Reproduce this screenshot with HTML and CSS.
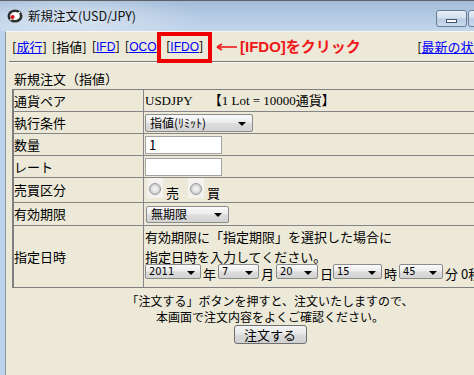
FILE: index.html
```html
<!DOCTYPE html>
<html lang="ja">
<head>
<meta charset="utf-8">
<title>新規注文(USD/JPY)</title>
<link rel="stylesheet" href="styles.css">
</head>
<body>
<div class="window">
  <div class="titlebar">
    <svg class="app-icon" width="16" height="14" viewBox="0 0 16 14">
      <ellipse cx="8" cy="7" rx="6.2" ry="5.3" fill="#fff" stroke="#2e2e2e" stroke-width="2.6"/>
      <path d="M3 11 L13 3" stroke="#fff" stroke-width="1.6"/>
      <circle cx="5.6" cy="8" r="2" fill="#e01010"/>
    </svg>
    <span class="title">新規注文(USD/JPY)</span>
    <div class="controls">
      <span class="ctl ctl-min"><span class="min-glyph"></span></span>
      <span class="ctl ctl-max"></span>
      <span class="ctl ctl-close"></span>
    </div>
  </div>
  <div class="client">
    <div class="nav">
      <span class="tab">[<a href="#">成行</a>]</span>
      <span class="tab">[指値]</span>
      <span class="tab">[<a href="#" class="latin">IFD</a>]</span>
      <span class="tab">[<a href="#" class="latin">OCO</a>]</span>
      <span class="tab">[<a href="#" class="latin">IFDO</a>]</span>
      <span class="tab latest">[<a href="#">最新の状況</a>]</span>
    </div>
    <span class="callout-box"></span>
    <div class="callout">
      <svg class="callout-arrow" width="22" height="10" viewBox="0 0 22 10">
        <path d="M2 5 H21" stroke="#f01818" stroke-width="1.6"/>
        <path d="M1 5 L6 2 M1 5 L6 8" stroke="#f01818" stroke-width="1.6" fill="none"/>
      </svg>
      <span class="callout-text">[IFDO]をクリック</span>
    </div>
    <div class="main">
      <div class="section-title">新規注文（指値）</div>
      <div class="form">
        <div class="cell label">通貨ペア</div>
        <div class="cell value"><span class="pair">USDJPY</span><span class="lot">【1 Lot = 10000通貨】</span></div>

        <div class="cell label">執行条件</div>
        <div class="cell value"><span class="select sel-exec"><span class="sel-text">指値(ﾘﾐｯﾄ)</span><span class="arrow"></span></span></div>

        <div class="cell label">数量</div>
        <div class="cell value"><span class="input">1</span></div>

        <div class="cell label">レート</div>
        <div class="cell value"><span class="input"></span></div>

        <div class="cell label">売買区分</div>
        <div class="cell value radios">
          <span class="radio-item"><span class="radio-box"><span class="radio"></span></span><span class="radio-label">売</span></span>
          <span class="radio-item second"><span class="radio-box"><span class="radio"></span></span><span class="radio-label">買</span></span>
        </div>

        <div class="cell label">有効期限</div>
        <div class="cell value"><span class="select sel-expire"><span class="sel-text">無期限</span><span class="arrow"></span></span></div>

        <div class="cell label last">指定日時</div>
        <div class="cell value last datetime">
          <div class="dt-text">有効期限に「指定期限」を選択した場合に<br>指定日時を入力してください。</div>
          <div class="date-row">
            <span class="select small w-year"><span class="sel-text">2011</span><span class="arrow"></span></span><span class="unit">年</span>
            <span class="select small w-month"><span class="sel-text">7</span><span class="arrow"></span></span><span class="unit">月</span>
            <span class="select small w-day"><span class="sel-text">20</span><span class="arrow"></span></span><span class="unit tight">日</span>
            <span class="select small w-hour"><span class="sel-text">15</span><span class="arrow"></span></span><span class="unit">時</span>
            <span class="select small w-min"><span class="sel-text">45</span><span class="arrow"></span></span><span class="unit">分 0秒</span>
          </div>
        </div>
      </div>
      <div class="note">
        <p class="note-line">「注文する」ボタンを押すと、注文いたしますので、</p>
        <p class="note-line">本画面で注文内容をよくご確認ください。</p>
        <div class="btn-row"><button class="order-btn" type="button">注文する</button></div>
      </div>
    </div>
  </div>
</div>
</body>
</html>
```

FILE: styles.css
```css
html, body {
  margin: 0;
  padding: 0;
}

body {
  width: 474px;
  height: 375px;
  overflow: hidden;
  font-family: "Noto Sans CJK JP", sans-serif;
  font-size: 13px;
  color: #000;
  background: #bcd3ec;
}

.window {
  width: 546px;
  height: 375px;
  display: flex;
  flex-direction: column;
  background: #bcd3ec;
}

/* Title bar */
.titlebar {
  height: 31px;
  box-sizing: border-box;
  border-top: 1px solid #5c6166;
  display: flex;
  align-items: center;
  padding: 0 6px 0 7px;
  background:
    radial-gradient(ellipse 130px 26px at 70px 16px, rgba(255, 255, 255, 0.45), rgba(255, 255, 255, 0)),
    linear-gradient(to bottom, #a3bcd9 0%, #b3c9e3 45%, #c3d6ec 100%);
}

.app-icon {
  flex: none;
}

.title {
  margin-left: 5px;
  font-size: 12.5px;
  line-height: 16px;
  color: #111;
}

.controls {
  margin-left: auto;
  align-self: flex-start;
  margin-top: 9px;
  display: flex;
  gap: 1px;
}

.ctl {
  height: 17px;
  box-sizing: border-box;
  border: 1px solid #6b7d94;
  border-radius: 3px;
  background: linear-gradient(to bottom, #e8eff8 0%, #d2dfef 48%, #b9cce4 52%, #c9daee 100%);
  display: flex;
  align-items: center;
  justify-content: center;
}

.ctl-min { width: 31px; }
.ctl-max { width: 27px; }
.ctl-close {
  width: 44px;
  background: linear-gradient(to bottom, #e8a493 0%, #d7735c 48%, #c74c33 52%, #d86a4c 100%);
}

.min-glyph {
  width: 9px;
  height: 2px;
  border: 1px solid #47536a;
  background: #fff;
  margin-top: 4px;
}

/* Client area */
.client {
  position: relative;
  flex: 1;
  margin: 0 5px;
  background: #ece9d8;
  border-left: 1px solid #8693a3;
  border-top: 1px solid #f7f7f3;
}

.nav {
  height: 29px;
  margin-left: 3px;
  padding: 0 50px 0 3px;
  display: flex;
  align-items: center;
  border-bottom: 1px solid #767676;
  box-shadow: 0 1px 0 #faf9f4;
  line-height: 18px;
}

.tab + .tab {
  margin-left: 5px;
}

.tab a {
  color: #0000ff;
  text-decoration: underline;
}

.tab a.latin {
  font-family: "Liberation Sans", "Noto Sans CJK JP", sans-serif;
  font-size: 12px;
}

.tab.latest {
  margin-left: auto;
}

.callout-box {
  position: absolute;
  left: 151px;
  top: 0;
  width: 55px;
  height: 31px;
  box-sizing: border-box;
  border: 4px solid #f00000;
}

.callout {
  position: absolute;
  left: 210px;
  top: 4px;
  display: flex;
  align-items: center;
  height: 22px;
}

.callout-arrow {
  flex: none;
}

.callout-text {
  margin-left: 2px;
  font-family: "Liberation Sans", "Noto Sans CJK JP", sans-serif;
  font-size: 15px;
  font-weight: 700;
  color: #f01818;
  line-height: 20px;
}

/* Main */
.main {
  padding: 0 6px;
}

.section-title {
  margin-top: 8px;
  margin-bottom: 1px;
  padding-left: 2px;
  line-height: 18px;
}

.form {
  width: 516px;
  box-sizing: border-box;
  border: 1px solid #7f7f7f;
  border-left-width: 2px;
  display: grid;
  grid-template-columns: 130px 1fr;
  grid-template-rows: 22px 22px 22px 22px 25px 23px 61px;
}

.cell {
  box-sizing: border-box;
  border-bottom: 1px solid #858585;
  display: flex;
  align-items: center;
  line-height: 18px;
}

.cell.last {
  border-bottom: none;
}

.label {
  border-right: 1px solid #858585;
  padding-left: 0;
}

.value {
  padding-left: 1px;
}

.pair {
  font-family: "Liberation Serif", "Noto Sans CJK JP", serif;
  font-size: 13px;
  font-weight: 400;
}

.lot {
  margin-left: 16px;
  font-family: "Liberation Serif", "Noto Sans CJK JP", serif;
  font-size: 13px;
  font-weight: 400;
}

/* Select look-alike */
.select {
  display: inline-flex;
  align-items: center;
  justify-content: space-between;
  box-sizing: border-box;
  border: 1px solid #8b8b8b;
  border-radius: 2px;
  background: linear-gradient(to bottom, #fafafa 0%, #ececec 45%, #dcdcdc 55%, #d3d3d3 100%);
  padding: 0 6px 0 4px;
  font-size: 12px;
  line-height: 14px;
  flex: none;
}

.arrow {
  width: 0;
  height: 0;
  border-left: 4px solid transparent;
  border-right: 4px solid transparent;
  border-top: 4px solid #000;
  margin-top: 2px;
}

.sel-exec {
  width: 108px;
  height: 18px;
}

.sel-expire {
  width: 83px;
  height: 17px;
  margin-left: 1px;
}

.select.small {
  height: 15px;
  font-family: "DejaVu Sans Condensed", "Liberation Sans Narrow", "Liberation Sans", sans-serif;
  font-size: 11px;
  font-stretch: condensed;
  padding: 0 5px 0 3px;
}

.w-year { width: 56px; }
.w-month { width: 41px; }
.w-day { width: 42px; }
.w-hour { width: 49px; }
.w-min { width: 44px; }

.input {
  display: inline-block;
  box-sizing: border-box;
  width: 77px;
  height: 18px;
  border: 1px solid #a3a3a3;
  background: #fff;
  padding-left: 3px;
  line-height: 16px;
  font-size: 13px;
}

/* Radios */
.radios {
  align-items: flex-start;
}

.radio-item {
  display: inline-flex;
  align-items: flex-end;
  height: 22px;
  margin-left: 2px;
}

.radio-item.second {
  margin-left: 9px;
}

.radio-box {
  width: 16px;
  height: 20px;
  align-self: flex-start;
  background: #f3f2ee;
  display: flex;
  justify-content: center;
  padding-top: 5px;
  box-sizing: border-box;
}

.radio {
  width: 12px;
  height: 12px;
  box-sizing: border-box;
  border-radius: 50%;
  border: 1px solid #9a9a9a;
  background: radial-gradient(circle at 50% 50%, #f6f6f6 0%, #e2e2e2 45%, #c9c9c9 70%, #eeeeee 100%);
}

.radio-label {
  margin-left: 3px;
  line-height: 15px;
}

/* Date time */
.datetime {
  display: block;
  padding-top: 1px;
}

.dt-text {
  line-height: 20px;
}

.date-row {
  display: flex;
  align-items: flex-end;
  margin-top: -3px;
}

.unit {
  margin: 0 2px -2px 2px;
  line-height: 15px;
}

.unit.tight {
  margin-right: 0;
}

/* Note & button */
.note {
  width: 516px;
  text-align: center;
  font-size: 12px;
  margin-top: 5px;
}

.note-line {
  margin: 0;
  line-height: 16px;
}

.btn-row {
  margin-top: 0;
}

.order-btn {
  width: 73px;
  height: 19px;
  padding: 0;
  border: 1px solid #707070;
  border-radius: 3px;
  background: linear-gradient(to bottom, #f4f4f4 0%, #e8e8e8 48%, #dadada 52%, #d0d0d0 100%);
  font-family: "Noto Sans CJK JP", sans-serif;
  font-size: 13px;
  line-height: 17px;
  color: #000;
}
```
